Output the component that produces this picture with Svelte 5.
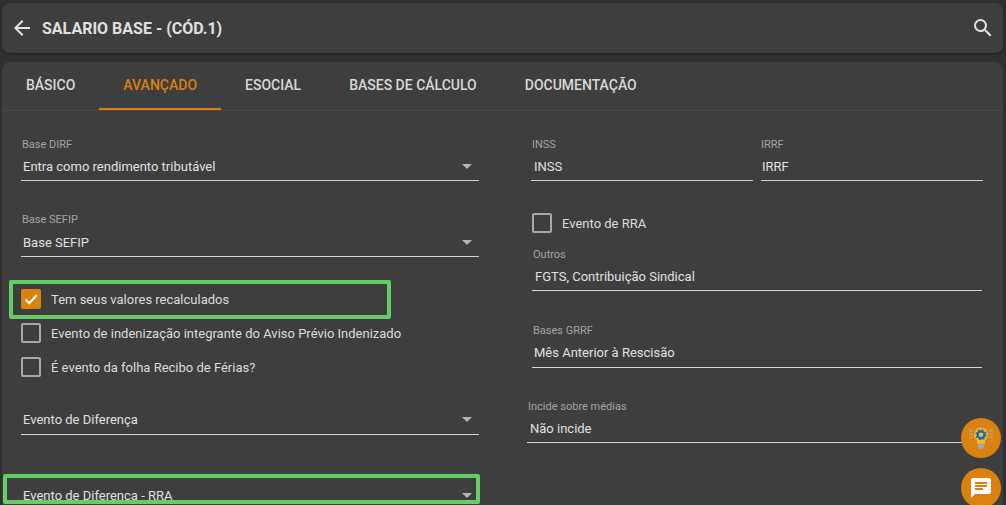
<script lang="ts">
	const tabs = ['Básico', 'Avançado', 'eSocial', 'Bases de cálculo', 'Documentação'];
	const active = 'Avançado';
</script>

{#snippet field(label: string, value: string, arrow = false, cls = '')}
	<div class="field {cls}">
		<span class="field-label">{label}</span>
		<div class="field-input">
			<span class="field-value">{value}</span>
			{#if arrow}<span class="arrow"></span>{/if}
		</div>
	</div>
{/snippet}

{#snippet check(label: string, checked = false)}
	<div class="check-row">
		<span class="box" class:checked>
			{#if checked}
				<svg viewBox="0 0 20 20" width="20" height="20">
					<path d="M4.5 10.500l3.800 3.800 7.500-8.300" fill="none" stroke="#fff" stroke-width="2" />
				</svg>
			{/if}
		</span>
		<span class="check-label">{label}</span>
	</div>
{/snippet}

<div class="page">
	<header class="toolbar">
		<svg class="back" viewBox="0 0 24 24" width="24" height="24">
			<path fill="#e4e4e4" d="M20 11H7.830l5.590-5.590L12 4l-8 8 8 8 1.410-1.410L7.830 13H20v-2z" />
		</svg>
		<h1>SALARIO BASE - (CÓD.1)</h1>
		<svg class="search" viewBox="0 0 24 24" width="24" height="24">
			<path fill="#e4e4e4" d="M15.500 14h-.79l-.28-.27A6.470 6.470 0 0 0 16 9.500 6.500 6.500 0 1 0 9.500 16c1.610 0 3.090-.59 4.230-1.570l.27.280v.790l5 4.990L20.490 19l-4.990-5zm-6 0C7.010 14 5 11.990 5 9.500S7.010 5 9.500 5 14 7.010 14 9.500 11.990 14 9.500 14z" />
		</svg>
	</header>

	<section class="card">
		<nav class="tabs">
			{#each tabs as tab}
				<div class="tab" class:active={tab === active}>{tab}</div>
			{/each}
		</nav>

		<div class="form">
			<div class="col-left">
				{@render field('Base DIRF', 'Entra como rendimento tributável', true, 'short')}
				{@render field('Base SEFIP', 'Base SEFIP', true, 'sefip')}
				<div class="checks">
					{@render check('Tem seus valores recalculados', true)}
					{@render check('Evento de indenização integrante do Aviso Prévio Indenizado')}
					{@render check('É evento da folha Recibo de Férias?')}
				</div>
				{@render field('', 'Evento de Diferença', true, 'diff')}
				{@render field('', 'Evento de Diferença - RRA', true, 'diff-rra')}
			</div>

			<div class="col-right">
				<div class="pair">
					{@render field('INSS', 'INSS', false, 'short')}
					{@render field('IRRF', 'IRRF', false, 'short irrf')}
				</div>
				<div class="rra-check">
					{@render check('Evento de RRA')}
				</div>
				{@render field('Outros', 'FGTS, Contribuição Sindical', false, 'short outros')}
				{@render field('Bases GRRF', 'Mês Anterior à Rescisão', false, 'grrf')}
				{@render field('Incide sobre médias', 'Não incide', false, 'short medias')}
			</div>
		</div>

		<div class="highlight hl-check"></div>
		<div class="highlight hl-rra"></div>
	</section>

	<div class="fab fab-idea">
		<svg viewBox="0 0 26 26" width="26" height="26">
			<path fill="none" stroke="#d4b45c" stroke-width="1" d="M1 4l4 2M1 9h4M1 14l4-2M25 4l-4 2M25 9h-4M25 14l-4-2" />
			<path fill="none" stroke="#8fa9a0" stroke-width="1" d="M1 6.500h3M1 11.500h3M22 6.500h3M22 11.500h3" />
			<path fill="#f6b53a" d="M13 2.500a7 7 0 0 0-4 12.700V19h8v-3.800A7 7 0 0 0 13 2.500z" />
			<circle cx="13" cy="9.700" r="3.400" fill="#f6b53a" stroke="#0f6cb5" stroke-width="2.200" />
			<circle cx="13" cy="9.700" r="5" fill="none" stroke="#0f6cb5" stroke-width="1.200" stroke-dasharray="2 1.930" />
			<path fill="#7fb4c9" d="M10 19.500h6V22l-1.500 2h-3L10 22z" />
		</svg>
	</div>
	<div class="fab fab-chat">
		<svg viewBox="0 0 24 24" width="24" height="24">
			<path fill="#fff" d="M20 2H4c-1.100 0-2 .9-2 2v18l4-4h14c1.100 0 2-.9 2-2V4c0-1.100-.9-2-2-2zM6 9h12v2H6V9zm8 5H6v-2h8v2zm4-6H6V6h12v2z" />
		</svg>
	</div>
</div>

<style>
	:global(body) {
		margin: 0;
		background: #303030;
		overflow: hidden;
	}
	.page {
		position: relative;
		height: 505px;
		box-sizing: border-box;
		padding: 3px 3px 0 2px;
		overflow: hidden;
		font-family: Roboto, 'Liberation Sans', sans-serif;
		color: #e0e0e0;
	}
	.toolbar {
		display: flex;
		align-items: center;
		height: 50px;
		padding: 0 8px 0 8px;
		background: #3e3e3e;
		border-radius: 8px;
		box-shadow: 0 1px 3px rgba(0, 0, 0, 0.35);
	}
	.back {
		margin-right: 8px;
	}
	h1 {
		flex: 1;
		margin: 0;
		font-size: 16px;
		font-weight: 700;
		color: #e0e0e0;
	}
	.card {
		position: relative;
		margin-top: 9px;
		height: 460px;
		background: #3e3e3e;
		border-radius: 8px 8px 0 0;
	}
	.tabs {
		display: flex;
		height: 48px;
		border-bottom: 1px solid #484848;
	}
	.tab {
		display: flex;
		align-items: center;
		padding: 0 24px;
		font-size: 14px;
		font-weight: 500;
		text-transform: uppercase;
		color: #d8d8d8;
		box-sizing: border-box;
		height: 48px;
		border-bottom: 2px solid transparent;
	}
	.tab.active {
		color: #da8110;
		border-bottom-color: #da8110;
	}
	.form {
		display: flex;
		padding: 27px 0 0 19px;
	}
	.col-left {
		width: 458px;
		flex: none;
	}
	.col-right {
		width: 452px;
		margin-left: 52px;
		flex: none;
	}
	.field {
		display: flex;
		flex-direction: column;
	}
	.field-label {
		height: 14px;
		font-size: 11px;
		line-height: 14px;
		color: #a4a4a4;
		padding-left: 1px;
	}
	.field-input {
		display: flex;
		align-items: center;
		justify-content: space-between;
		height: 30px;
		padding: 0 6px 0 2px;
		box-sizing: border-box;
		border-bottom: 1px solid #d6d6d6;
	}
	.col-right .field-input {
		padding-left: 3px;
	}
	.col-right .irrf .field-input {
		padding-left: 1px;
	}
	.col-right .grrf .field-input {
		padding-left: 2px;
	}
	.irrf .field-label {
		padding-left: 0;
	}
	.field-value {
		font-size: 13px;
		color: #e0e0e0;
	}
	.arrow {
		width: 0;
		height: 0;
		margin-right: 1px;
		border-left: 5px solid transparent;
		border-right: 5px solid transparent;
		border-top: 5px solid #b4b4b4;
	}
	.short .field-input {
		height: 29px;
	}
	.sefip {
		margin-top: 32px;
	}
	.sefip .field-input {
		padding-top: 2px;
	}
	.checks {
		display: flex;
		flex-direction: column;
		gap: 14px;
		margin-top: 32px;
	}
	.check-row {
		display: flex;
		align-items: center;
		height: 20px;
	}
	.box {
		box-sizing: border-box;
		width: 20px;
		height: 20px;
		border: 2px solid #a8a8a8;
		border-radius: 2px;
		flex: none;
	}
	.box.checked {
		border: none;
		background: #da8110;
	}
	.box svg {
		display: block;
	}
	.check-label {
		margin-left: 10px;
		font-size: 13px;
		color: #dcdcdc;
	}
	.diff {
		margin-top: 14px;
	}
	.diff-rra {
		margin-top: 32px;
	}
	.pair {
		display: flex;
		gap: 8px;
	}
	.pair .field {
		width: 222px;
	}
	.rra-check {
		margin-top: 32px;
		padding-left: 1px;
	}
	.outros {
		margin-top: 15px;
		margin-left: 1px;
		width: 450px;
	}
	.grrf {
		margin-top: 33px;
		margin-left: 1px;
		width: 450px;
	}
	.medias {
		margin-top: 32px;
		margin-left: -4px;
	}
	.highlight {
		position: absolute;
		box-sizing: border-box;
		border: 4px solid #66cc66;
		border-radius: 2px;
	}
	.hl-check {
		left: 7px;
		top: 218px;
		width: 382px;
		height: 39px;
	}
	.hl-rra {
		left: 1px;
		top: 412px;
		width: 477px;
		height: 30px;
	}
	.fab {
		position: absolute;
		right: 5px;
		width: 40px;
		height: 40px;
		border-radius: 50%;
		background: #da8110;
		display: flex;
		align-items: center;
		justify-content: center;
	}
	.fab-idea {
		top: 418px;
	}
	.fab-chat {
		top: 468px;
	}
</style>
